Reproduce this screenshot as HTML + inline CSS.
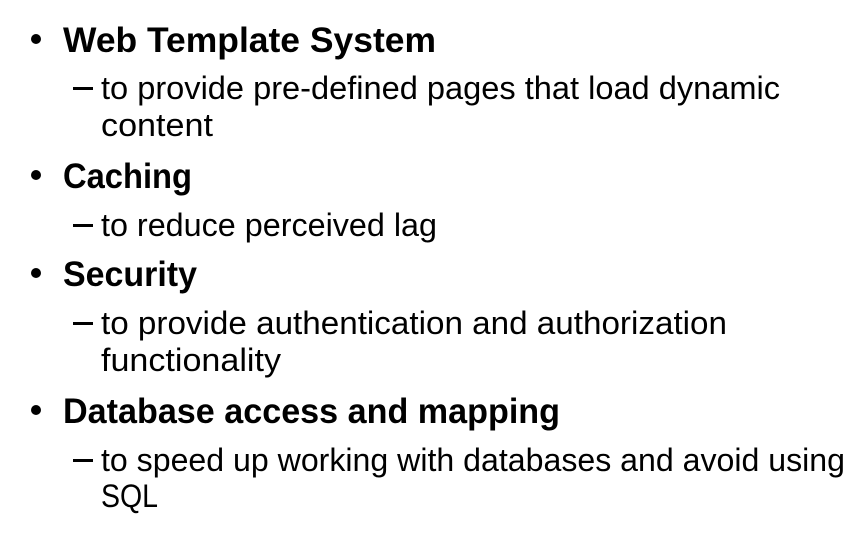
<!DOCTYPE html>
<html><head><meta charset="utf-8"><style>html,body{margin:0;padding:0;background:#fff;}svg{display:block}</style></head>
<body>
<svg width="867" height="536" xmlns="http://www.w3.org/2000/svg" font-family="Liberation Sans, sans-serif" fill="#000">
<g font-weight="bold" font-size="35">
<text x="63" y="52" textLength="373" lengthAdjust="spacingAndGlyphs">Web Template System</text>
<text x="63" y="188" textLength="129" lengthAdjust="spacingAndGlyphs">Caching</text>
<text x="63" y="286" textLength="134" lengthAdjust="spacingAndGlyphs">Security</text>
<text x="63" y="423" textLength="497" lengthAdjust="spacingAndGlyphs">Database access and mapping</text>
</g>
<g>
<circle cx="36" cy="39" r="5"/>
<circle cx="36" cy="175" r="5"/>
<circle cx="36" cy="273" r="5"/>
<circle cx="36" cy="410" r="5"/>
<rect x="73" y="87" width="20" height="3"/>
<rect x="73" y="224" width="20" height="3"/>
<rect x="73" y="322" width="20" height="3"/>
<rect x="73" y="459" width="20" height="3"/>
</g>
<g font-size="32">
<text x="101" y="99" textLength="679" lengthAdjust="spacingAndGlyphs">to provide pre-defined pages that load dynamic</text>
<text x="101" y="136" textLength="112" lengthAdjust="spacingAndGlyphs">content</text>
<text x="101" y="236" textLength="336" lengthAdjust="spacingAndGlyphs">to reduce perceived lag</text>
<text x="101" y="334" textLength="626" lengthAdjust="spacingAndGlyphs">to provide authentication and authorization</text>
<text x="101" y="371" textLength="180" lengthAdjust="spacingAndGlyphs">functionality</text>
<text x="101" y="471" textLength="744" lengthAdjust="spacingAndGlyphs">to speed up working with databases and avoid using</text>
<text x="101" y="507" textLength="57" lengthAdjust="spacingAndGlyphs">SQL</text>
</g>
</svg>
</body></html>
